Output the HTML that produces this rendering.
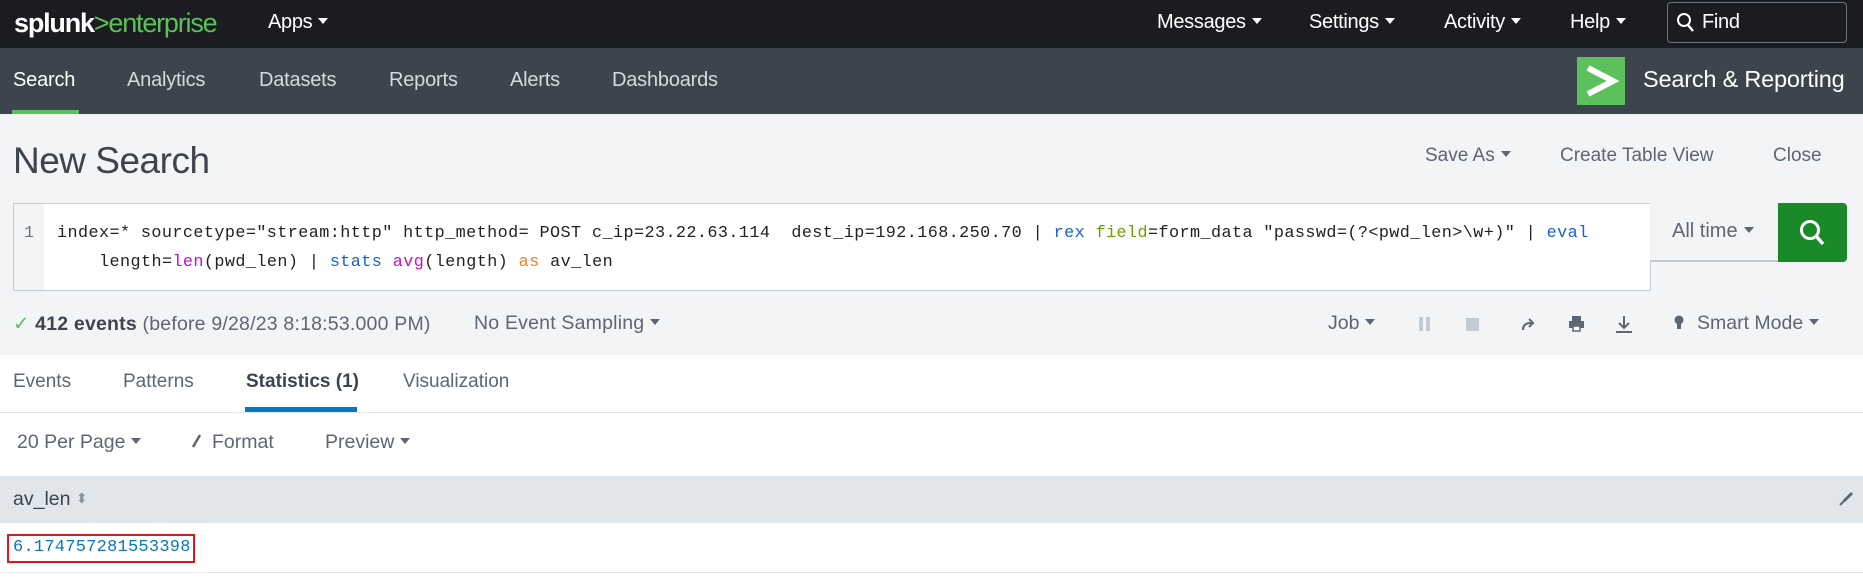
<!DOCTYPE html>
<html><head><meta charset="utf-8"><style>
*{margin:0;padding:0;box-sizing:border-box}
body{width:1863px;height:578px;overflow:hidden;background:#fff;font-family:"Liberation Sans",sans-serif;position:relative;color:#3c444d}
.a{position:absolute;white-space:pre}
.tri{display:inline-block;width:0;height:0;border-left:5px solid transparent;border-right:5px solid transparent;border-top:6px solid currentColor;vertical-align:middle;margin-left:6px;position:relative;top:-2px}
.top{position:absolute;left:0;top:0;width:1863px;height:48px;background:#1a1c20}
.top .a{color:#fff;font-size:20px;top:11px;letter-spacing:-0.3px}
.nav{position:absolute;left:0;top:48px;width:1863px;height:66px;background:#3c444d}
.nav .a{color:#d6dadf;font-size:20px;top:21px;letter-spacing:-0.2px}
.gray{position:absolute;left:0;top:114px;width:1863px;height:241px;background:#f2f4f5}
.mono{font-family:"Liberation Mono",monospace;font-size:16.8px;letter-spacing:0.42px;color:#222}
</style></head><body>
<div class="top">
 <div class="a" style="left:14px;top:8px;font-size:27px;letter-spacing:-1.2px;color:#fff"><b style="font-weight:600">splunk</b><span style="color:#5cc05c">&gt;enterprise</span></div>
 <div class="a" style="left:268px">Apps<span class="tri"></span></div>
 <div class="a" style="left:1157px">Messages<span class="tri"></span></div>
 <div class="a" style="left:1309px">Settings<span class="tri"></span></div>
 <div class="a" style="left:1444px">Activity<span class="tri"></span></div>
 <div class="a" style="left:1570px">Help<span class="tri"></span></div>
 <div style="position:absolute;left:1667px;top:2px;width:180px;height:41px;border:1px solid #6b7480;border-radius:4px"></div>
 <svg class="a" style="left:1676px;top:12px" width="20" height="22" viewBox="0 0 20 22"><circle cx="8" cy="8" r="6" fill="none" stroke="#fff" stroke-width="2"/><path d="M12 13 L17 19" stroke="#fff" stroke-width="2.5"/></svg>
 <div class="a" style="left:1702px">Find</div>
</div>
<div class="nav">
 <div class="a" style="left:13px;color:#fff">Search</div>
 <div style="position:absolute;left:12px;top:62px;width:67px;height:4px;background:#5cc05c"></div>
 <div class="a" style="left:127px">Analytics</div>
 <div class="a" style="left:259px">Datasets</div>
 <div class="a" style="left:389px">Reports</div>
 <div class="a" style="left:510px">Alerts</div>
 <div class="a" style="left:612px">Dashboards</div>
 <div style="position:absolute;left:1577px;top:9px;width:48px;height:48px;background:#5cc05c"></div>
 <svg class="a" style="left:1577px;top:9px" width="48" height="48" viewBox="0 0 48 48"><path d="M11 11 L36 24 L11 37" fill="none" stroke="#fff" stroke-width="6"/></svg>
 <div class="a" style="left:1643px;top:18px;font-size:23.5px;color:#fff">Search &amp; Reporting</div>
</div>
<div class="gray">
 <div class="a" style="left:13px;top:26px;font-size:37px;color:#3c444d;letter-spacing:-0.5px">New Search</div>
 <div class="a" style="left:1425px;top:31px;font-size:19px;color:#5c6773">Save As<span class="tri"></span></div>
 <div class="a" style="left:1560px;top:31px;font-size:19px;color:#5c6773">Create Table View</div>
 <div class="a" style="left:1773px;top:31px;font-size:19px;color:#5c6773">Close</div>
 <div style="position:absolute;left:13px;top:89px;width:1638px;height:88px;background:#fff;border:1px solid #c3cbd4"></div>
 <div style="position:absolute;left:14px;top:90px;width:30px;height:86px;background:#f2f4f5"></div>
 <div class="a mono" style="left:24px;top:110px;color:#6b7480">1</div>
 <div class="a mono" style="left:57px;top:110px">index=* sourcetype="stream:http" http_method= POST c_ip=23.22.63.114  dest_ip=192.168.250.70 | <span style="color:#1a5fd6">rex</span> <span style="color:#6aa000">field</span>=form_data "passwd=(?&lt;pwd_len&gt;\w+)" | <span style="color:#1a5fd6">eval</span></div>
 <div class="a mono" style="left:99px;top:139px">length=<span style="color:#c410c4">len</span>(pwd_len) | <span style="color:#1a5fd6">stats</span> <span style="color:#c410c4">avg</span>(length) <span style="color:#f58220">as</span> av_len</div>
 <div style="position:absolute;left:1650px;top:89px;width:128px;height:59px;background:#f2f4f5;border-bottom:2px solid #c3cbd4"></div>
 <div class="a" style="left:1672px;top:106px;font-size:20px;color:#5c6773">All time<span class="tri"></span></div>
 <div style="position:absolute;left:1778px;top:89px;width:69px;height:59px;background:#1a8929;border-radius:0 4px 4px 0"></div>
 <svg class="a" style="left:1798px;top:104px" width="30" height="30" viewBox="0 0 30 30"><circle cx="12" cy="12" r="8.5" fill="none" stroke="#fff" stroke-width="3"/><path d="M18 18 L25 26" stroke="#fff" stroke-width="3.5"/></svg>
 <div class="a" style="left:13px;top:198px;font-size:19.5px;letter-spacing:0.2px;color:#3c444d"><span style="color:#5cc05c">✓</span> <b>412 events</b> <span style="color:#5c6773">(before 9/28/23 8:18:53.000 PM)</span></div>
 <div class="a" style="left:474px;top:198px;font-size:19.5px;letter-spacing:0.2px;color:#5c6773">No Event Sampling<span class="tri"></span></div>
 <div class="a" style="left:1328px;top:198px;font-size:19.5px;color:#5c6773">Job<span class="tri"></span></div>
 <div style="position:absolute;left:1419px;top:203px;width:4px;height:14px;background:#c3cbd4"></div>
 <div style="position:absolute;left:1426px;top:203px;width:4px;height:14px;background:#c3cbd4"></div>
 <div style="position:absolute;left:1466px;top:204px;width:13px;height:13px;background:#c3cbd4"></div>
 <svg class="a" style="left:1520px;top:202px" width="16" height="16" viewBox="0 0 16 16"><path d="M3 14 Q3 7 11 7" fill="none" stroke="#5c6773" stroke-width="2"/><path d="M9 3 L13 7 L9 11" fill="none" stroke="#5c6773" stroke-width="2"/></svg>
 <svg class="a" style="left:1568px;top:201px" width="17" height="17" viewBox="0 0 17 17"><rect x="4" y="1" width="9" height="5" fill="#5c6773"/><rect x="1" y="6" width="15" height="7" fill="#5c6773"/><rect x="5" y="11" width="7" height="5" fill="#fff" stroke="#5c6773" stroke-width="1.5"/></svg>
 <svg class="a" style="left:1615px;top:201px" width="18" height="18" viewBox="0 0 18 18"><path d="M9 1 V12 M4 8 L9 13 L14 8 M1 17 H17" fill="none" stroke="#5c6773" stroke-width="2"/></svg>
 <svg class="a" style="left:1673px;top:201px" width="12" height="16" viewBox="0 0 12 16"><circle cx="6" cy="5" r="4.5" fill="#5c6773"/><rect x="4" y="8" width="4" height="6" fill="#5c6773"/></svg>
 <div class="a" style="left:1697px;top:198px;font-size:19.5px;color:#5c6773">Smart Mode<span class="tri"></span></div>
</div>
<div class="a" style="left:13px;top:371px;font-size:19px;color:#5c6773">Events</div>
<div class="a" style="left:123px;top:371px;font-size:19px;color:#5c6773">Patterns</div>
<div class="a" style="left:246px;top:371px;font-size:19px;color:#3c444d;font-weight:bold">Statistics (1)</div>
<div style="position:absolute;left:245px;top:407px;width:112px;height:5px;background:#0877c1"></div>
<div class="a" style="left:403px;top:371px;font-size:19px;color:#5c6773">Visualization</div>
<div style="position:absolute;left:0;top:412px;width:1863px;height:1px;background:#e1e6eb"></div>
<div class="a" style="left:17px;top:431px;font-size:19.5px;color:#5c6773">20 Per Page<span class="tri"></span></div>
<svg class="a" style="left:190px;top:434px" width="12" height="16" viewBox="0 0 12 16"><path d="M10 1 L3 13" stroke="#5c6773" stroke-width="2.5"/></svg>
<div class="a" style="left:212px;top:431px;font-size:19.5px;color:#5c6773">Format</div>
<div class="a" style="left:325px;top:431px;font-size:19.5px;color:#5c6773">Preview<span class="tri"></span></div>
<div style="position:absolute;left:0;top:476px;width:1863px;height:47px;background:#e1e6eb"></div>
<div class="a" style="left:13px;top:488px;font-size:19.5px;color:#3c444d">av_len <span style="color:#8a949e;font-size:14px;position:relative;top:-2px">⬍</span></div>
<svg class="a" style="left:1838px;top:491px" width="16" height="16" viewBox="0 0 16 16"><path d="M14 2 L6 10" stroke="#5c6773" stroke-width="3"/><path d="M6 10 L2 14" stroke="#5c6773" stroke-width="2"/></svg>
<div style="position:absolute;left:7px;top:534px;width:188px;height:29px;border:2px solid #e0161c"></div>
<div class="a mono" style="left:13px;top:538px;color:#0877c1;font-size:17px;letter-spacing:0.25px">6.174757281553398</div>
<div style="position:absolute;left:0;top:572px;width:1863px;height:1px;background:#e1e6eb"></div>
</body></html>
